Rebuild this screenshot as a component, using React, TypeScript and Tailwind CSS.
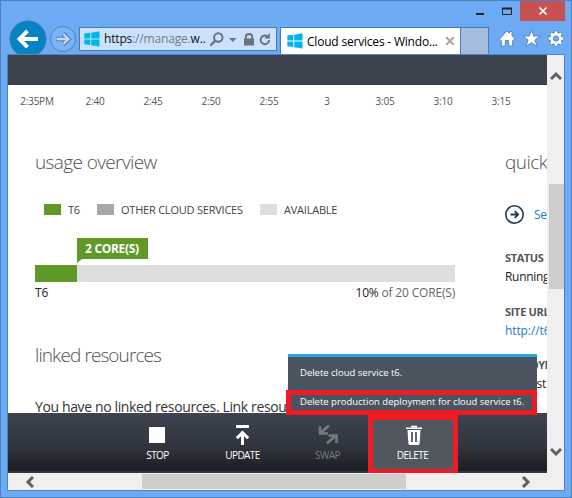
import type { ReactNode } from 'react';

const times = ['2:35PM', '2:40', '2:45', '2:50', '2:55', '3', '3:05', '3:10', '3:15'];

function WindowsLogo() {
  return (
    <svg width="16" height="16" viewBox="0 0 16 16" className="shrink-0" fill="#00b5ee">
      <path d="M0.3 2.6 6.3 1.8V7.5H0.3zM7.2 1.7 15.5 0.3V7.5H7.2zM0.3 8.5H6.3V14L0.3 13.2zM7.2 8.5H15.5V15.5L7.2 14.2z" />
    </svg>
  );
}

function Header() {
  return (
    <header className="h-[53px] shrink-0">
      <div className="flex h-[19px] justify-end pr-[6px]">
        <svg width="50" height="19" viewBox="470 1 50 19" fill="none" stroke="#1e2126">
          <path d="M476 14H484" strokeWidth="2" />
          <path d="M502.5 8V14.500H511.500V8" />
          <path d="M502 8.500H512" strokeWidth="2" />
        </svg>
        <div className="flex h-5 w-[45px] items-center justify-center bg-[#c75050]">
          <svg width="10" height="10" viewBox="0 0 10 10" fill="none" stroke="#fff" strokeWidth="1.7">
            <path d="M1.500 1.500 8.500 8.500M8.500 1.500 1.500 8.500" />
          </svg>
        </div>
      </div>
      <div className="flex h-[34px] overflow-hidden pl-2">
        <svg width="70" height="34" viewBox="9 20 70 34" className="shrink-0" fill="none">
          <circle cx="28" cy="39" r="18" fill="#0783c4" stroke="#40759f" />
          <path d="M38 39H20M27.500 30.800 19.400 39 27.500 47.200" stroke="#fff" strokeWidth="3.800" />
          <circle cx="63" cy="39" r="12.500" fill="#7bb3f3" stroke="#4883c3" />
          <path d="M56 39H67M63.200 33.600 68.600 39 63.200 44.400" stroke="#4b81bb" strokeWidth="4.400" />
          <path d="M56.500 39H68M63.300 34 68.400 39 63.300 44" stroke="#c2ddfb" strokeWidth="2.300" />
        </svg>
        <div className="mt-[7px] flex h-6 w-[198px] shrink-0 items-center overflow-hidden border border-[#477cb7] bg-[#cbe1fc] pl-1">
          <WindowsLogo />
          <span className="ml-1 w-[102px] whitespace-nowrap text-[12px] leading-5 tracking-[-0.17px] text-[#747c87]">
            <span className="text-[#111]">https</span>://manage.<span className="text-[#111]">w..</span>
          </span>
          <svg width="66" height="22" viewBox="206 28 66 22" className="shrink-0" fill="none" stroke="#68737f">
            <circle cx="218.300" cy="37.500" r="4.200" strokeWidth="2" />
            <path d="M215.300 40.700 210.400 45.500" strokeWidth="2.400" />
            <path d="M229 38H236.500L232.750 42Z" fill="#68737f" stroke="none" />
            <rect x="244" y="38.500" width="10" height="7" fill="#68737f" stroke="none" />
            <path d="M245.800 39V37Q245.800 34 249 34 252.200 34 252.200 37V39" strokeWidth="1.900" />
            <path d="M267.300 36.300A4.300 4.300 0 1 0 269.200 40" strokeWidth="2" />
            <path d="M269.800 33V38.500H264.300Z" fill="#68737f" stroke="none" />
          </svg>
        </div>
        <div className="ml-[3px] mt-[7px] flex h-[27px] w-[181px] shrink-0 items-center border border-b-0 border-[#477cb7] bg-white pl-[6px]">
          <WindowsLogo />
          <span className="ml-[4px] w-[138px] whitespace-nowrap pt-px text-[12px] tracking-[-0.2px] text-black">Cloud services - Windo...</span>
          <svg width="10" height="10" viewBox="0 0 10 10" fill="none" stroke="#aaa" strokeWidth="2.200">
            <path d="M1.200 1.200 8.800 8.800M8.800 1.200 1.200 8.800" />
          </svg>
        </div>
        <div className="mt-[7px] h-[27px] w-[28px] shrink-0 border border-b-0 border-l-0 border-[#477cb7] bg-[#a4bcdd]" />
        <svg width="74" height="34" viewBox="489 20 74 34" className="shrink-0" fill="#fff" stroke="#4d7fb6">
          <path d="M499.500 39 507 31 509.500 33.200V31.500H512V35.700L515 39 513.800 40.400H512.700V46H508.700V40.500H505.300V46H501.300V40.400H500.700Z" strokeWidth="0.900" />
          <path d="M531.500 29.800 533.700 36H540L535 40 537 46.500 531.500 42.700 526 46.500 528 40 523 36H529.300Z" strokeWidth="0.900" />
          <g strokeWidth="4.600" fill="none">
            <circle cx="556" cy="38.500" r="4.500" />
            <path d="M556 30.800V34.500M556 42.500V46.200M548.300 38.500H552M560 38.500H563.700M550.700 33.200 553.200 35.700M558.800 41.300 561.300 43.800M550.700 43.800 553.200 41.300M558.800 35.700 561.300 33.200" strokeWidth="4" />
          </g>
          <g stroke="#fff" fill="none">
            <circle cx="556" cy="38.500" r="4.300" strokeWidth="2.700" />
            <path d="M556 31.200V34.500M556 42.500V45.800M548.700 38.500H552M560 38.500H563.300M550.900 33.400 553 35.500M559 41.500 561.100 43.600M550.900 43.600 553 41.500M559 35.500 561.100 33.400" strokeWidth="2.600" />
          </g>
        </svg>
      </div>
    </header>
  );
}

function LegendItem({ swatch, children }: { swatch: string; children: ReactNode }) {
  return (
    <div className="flex h-[15px] items-center gap-[7px]">
      <span className={`h-[11px] w-[17px] ${swatch}`} />
      <span>{children}</span>
    </div>
  );
}

function Overview() {
  return (
    <section className="w-[497px] shrink-0 pl-[27px]">
      <h2 className="h-6 whitespace-nowrap text-[19px] font-light leading-6 tracking-[-0.62px] text-[#505050]">usage overview</h2>
      <div className="mt-[28px] flex h-[15px] whitespace-nowrap pl-[9px] text-[11px] leading-[15px] tracking-[-0.22px] text-[#444]">
        <div className="w-[53px]"><LegendItem swatch="bg-[#5f9a27]">T6</LegendItem></div>
        <div className="w-[163px]"><LegendItem swatch="bg-[#a8a8a8]">OTHER CLOUD SERVICES</LegendItem></div>
        <LegendItem swatch="bg-[#dedede]">AVAILABLE</LegendItem>
      </div>
      <div className="ml-[42px] mt-[21px] h-[27px] w-[71px]">
        <div className="h-[21px] whitespace-nowrap bg-[#5f9a27] pl-2 text-[12px] font-bold leading-[22px] tracking-[-0.3px] text-white">2 CORE(S)</div>
        <svg width="5" height="4" viewBox="0 0 5 4" className="block"><path d="M0 0H5L0 4Z" fill="#5f9a27" /></svg>
      </div>
      <div className="h-[17px] w-[420px] bg-[#dedede]"><div className="h-full w-[42px] bg-[#5f9a27]" /></div>
      <div className="flex h-5 w-[420px] justify-between whitespace-nowrap text-[12px] leading-[21px] tracking-[-0.18px] text-[#222]">
        <span>T6</span>
        <span>10% <span className="text-[#666]">of 20 CORE(S)</span></span>
      </div>
      <h2 className="mt-[41px] h-6 whitespace-nowrap text-[19px] font-light leading-6 tracking-[-0.9px] text-[#505050]">linked resources</h2>
      <p className="mt-[30px] whitespace-nowrap text-[14px] leading-5 tracking-[-0.37px] text-[#333]">You have no linked resources. Link resou</p>
    </section>
  );
}

function QuickGlance() {
  return (
    <section className="w-[80px] shrink-0 whitespace-nowrap text-[12px] text-[#222]">
      <h2 className="h-6 text-[19px] font-light leading-6 tracking-[-0.5px] text-[#505050]">quick glance</h2>
      <div className="mt-[30px] flex h-5 items-center gap-[9px] pt-px tracking-[-0.3px] text-[#1682c0]">
        <svg width="20" height="20" viewBox="0 0 20 20" className="shrink-0" fill="none" stroke="#1b3b55">
          <circle cx="9.500" cy="9.500" r="8.700" strokeWidth="1.600" />
          <path d="M5.500 9.500H13M9.800 6.200 13.100 9.500 9.800 12.800" strokeWidth="1.800" />
        </svg>
        <span>Set up</span>
      </div>
      <div className="mt-[26px] h-[17px] text-[11px] font-bold leading-4 tracking-[-0.4px] text-[#555]">STATUS</div>
      <div className="h-5 leading-5 tracking-[-0.3px]">Running</div>
      <div className="mt-[17px] h-[17px] text-[11px] font-bold leading-4 tracking-[-0.3px] text-[#555]">SITE URL</div>
      <div className="h-5 leading-5 tracking-[-0.1px] text-[#1682c0]">http://t6</div>
      <div className="mt-[16px] h-[17px] text-[11px] font-bold leading-4 tracking-[-0.6px] text-[#555]">DEPLOYMENT</div>
      <div className="h-5 leading-5 tracking-[-0.2px]">deptest</div>
    </section>
  );
}

function Command({ label, dim, className, children }: { label: string; dim?: boolean; className?: string; children: ReactNode }) {
  return (
    <div className={`flex w-[85px] shrink-0 flex-col items-center pt-[10px] ${dim ? 'text-[#777b80]' : 'text-white'} ${className ?? ''}`}>
      <svg width="24" height="24" viewBox="0 0 24 24" className="-ml-px" fill="none" stroke="currentColor" strokeWidth="3">{children}</svg>
      <span className="text-[10px] leading-4 tracking-[-0.55px]">{label}</span>
    </div>
  );
}

function CommandBar() {
  return (
    <footer className="absolute inset-x-0 bottom-0 flex h-[60px] border-b-2 border-[#34383d] bg-linear-to-b from-[#3d444f] via-[#2f353e] via-60% to-[#1b1e21] pl-[107px]">
      <Command label="STOP"><path d="M4 4H20V20H4Z" fill="currentColor" stroke="none" /></Command>
      <Command label="UPDATE">
        <path d="M6 3.500H19M12.500 22V10M6.800 15.300 12.500 9.600 18.200 15.300" />
      </Command>
      <Command label="SWAP" dim>
        <path d="M14 2.600 6 9.500M5 3.500V10.500H13M11.800 20.500 21 12.500M13.500 12.500H21.500V20" strokeWidth="2.600" />
      </Command>
      <div className="-ml-[2px] mt-[2px] h-[59px] w-[90px] shrink-0 border-[5px] border-[#ed1c24] bg-[#50575f]">
        <Command label="DELETE" className="-ml-[3px] -mt-[7px]">
          <g transform="translate(2 0)">
            <path d="M4 5.200H20M9 3.500H15" strokeWidth="1.500" />
            <path d="M5.500 7H18.500L17.600 20.500Q17.500 22 16 22H8Q6.500 22 6.400 20.500Z" fill="currentColor" stroke="none" />
            <path d="M10 9V19M14 9V19" stroke="#50575f" strokeWidth="1.800" />
          </g>
        </Command>
      </div>
    </footer>
  );
}

function DeleteMenu() {
  return (
    <div className="absolute bottom-[58px] left-[278px] w-[251px] whitespace-nowrap text-[9.500px] leading-4 tracking-[-0.01px] text-white">
      <div className="ml-[2px] h-[36px] border-t-[3px] border-[#26a8e0] bg-[#4a545f] pl-3 pt-[8px]">Delete cloud service t6.</div>
      <div className="h-[25px] border-[5px] border-[#ed1c24] bg-[#4a545f] pl-[9px] leading-[13px]">Delete production deployment for cloud service t6.</div>
    </div>
  );
}

function Chevron({ d }: { d: string }) {
  return <svg width="12" height="12" viewBox="0 0 12 12" className="shrink-0" fill="none" stroke="#606060" strokeWidth="3"><path d={d} /></svg>;
}

export default function App() {
  return (
    <div className="flex h-[498px] w-[572px] flex-col overflow-hidden border border-[#4c82bd] bg-[#6caaf4] font-['Open_Sans','Noto_Sans',sans-serif]">
      <Header />
      <div className="ml-[6px] flex h-[437px] w-[558px] flex-col border border-[#4a86c8] bg-[#efefef]">
        <div className="flex h-[418px] shrink-0">
          <main className="relative h-[418px] w-[539px] shrink-0 overflow-hidden bg-white">
            <div className="h-[30px] bg-[#3d434e]" />
            <div className="flex h-8 text-[10px] leading-[33px] tracking-[-0.25px] text-[#555]">
              {times.map((t) => <span key={t} className="w-[58px] shrink-0 text-center">{t}</span>)}
            </div>
            <div className="flex pt-[33px]">
              <Overview />
              <QuickGlance />
            </div>
            <CommandBar />
            <DeleteMenu />
          </main>
          <div className="flex w-[17px] flex-col items-center pb-[15px] pt-[15px]">
            <Chevron d="M1 9 6 4 11 9" />
            <div className="mb-auto ml-px mt-[102px] h-[105px] w-[15px] shrink-0 bg-[#cdcdcd]" />
            <Chevron d="M1 3 6 8 11 3" />
          </div>
        </div>
        <div className="flex h-[17px] items-center pl-[14px]">
          <Chevron d="M11 1 6 6 11 11" />
          <div className="ml-[108px] h-[15px] w-[264px] bg-[#cdcdcd]" />
          <div className="ml-[115px] flex"><Chevron d="M2 1 7 6 2 11" /></div>
        </div>
      </div>
    </div>
  );
}
